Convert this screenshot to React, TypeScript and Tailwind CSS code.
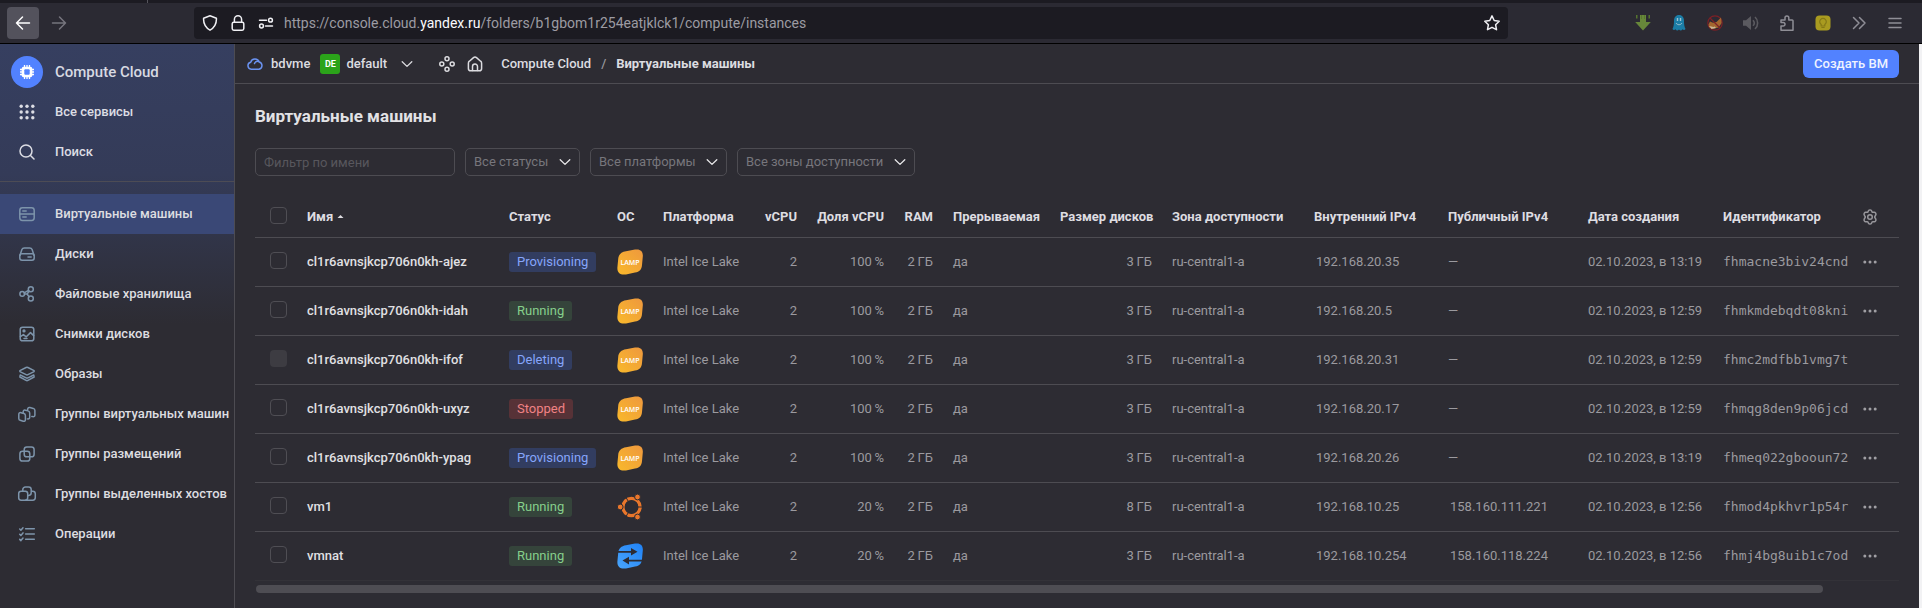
import React, { useState } from "react";

type IconProps = { className?: string; children: React.ReactNode };

function Glyph({ className = "size-4", children }: IconProps) {
  return (
    <svg
      viewBox="0 0 16 16"
      className={`shrink-0 ${className}`}
      fill="none"
      stroke="currentColor"
      strokeWidth="1.5"
      strokeLinecap="round"
      strokeLinejoin="round"
      aria-hidden="true"
    >
      {children}
    </svg>
  );
}

function Chevron({ className = "size-4" }: { className?: string }) {
  return (
    <Glyph className={className}>
      <path d="M3.200 5.800 8 10.400l4.800-4.600" strokeWidth="1.300" />
    </Glyph>
  );
}

const navItems: { label: string; active?: boolean; icon: React.ReactNode }[] = [
  {
    label: "Виртуальные машины",
    active: true,
    icon: (
      <>
        <rect x=".8" y="1.800" width="14.400" height="12.600" rx="2.600" />
        <path d="M.8 8h14.400M3.800 5h3.400M3.800 11h3.400" />
      </>
    ),
  },
  {
    label: "Диски",
    icon: (
      <>
        <path d="M1 9.200 2.900 3.600A2.600 2.600 0 0 1 5.300 1.900h5.400a2.600 2.600 0 0 1 2.400 1.700L15 9.200" />
        <rect x=".8" y="7.800" width="14.400" height="6.400" rx="2.200" />
        <path d="M9 11h3.200" />
      </>
    ),
  },
  {
    label: "Файловые хранилища",
    icon: (
      <>
        <circle cx="3.200" cy="7.900" r="2.300" />
        <circle cx="11.800" cy="3.200" r="2.500" />
        <circle cx="11.800" cy="12.600" r="2.500" />
        <path d="m5.200 6.800 4.300-2.400M5.500 8h2.600l2 2.700M8.100 8 10.100 5.300" />
      </>
    ),
  },
  {
    label: "Снимки дисков",
    icon: (
      <>
        <rect x="1.200" y="1.200" width="13.600" height="13.600" rx="2.400" />
        <path d="m1.400 10.600 3-2 2.900 2.200 4.200-4.200 3.200 3M5 12.400h3" />
        <circle cx="5" cy="4.900" r=".9" fill="currentColor" />
      </>
    ),
  },
  {
    label: "Образы",
    icon: (
      <>
        <path d="M7.100 1.500.9 4.600v1l6.200 3.100c.6.3 1.200.3 1.800 0l6.200-3.100v-1L8.900 1.500c-.6-.3-1.200-.3-1.800 0Z" />
        <path d="M1.200 9 .9 11l6.200 3.400c.6.3 1.200.3 1.800 0l6.200-3.400-.3-2L8.900 11.900c-.6.3-1.200.3-1.800 0Z" />
      </>
    ),
  },
  {
    label: "Группы виртуальных машин",
    icon: (
      <>
        <path d="M-.2 8.400c0-1.500 1-2 2.200-1.700l3 .8c1 .3 1.400.9 1.400 1.900v4.300c0 1.400-1 1.900-2.200 1.500l-3-.9c-1-.3-1.400-.9-1.400-1.900Z" />
        <path d="M4.200 6.700c-.3-1.900.7-2.900 2.200-2.500l2.600.7c1.200.3 1.700.9 1.700 2v4.400c0 1.300-.9 2-2.400 1.600M8.600 4.100c-.2-2 .8-3 2.300-2.600l3.400.9c1 .3 1.600 1 1.600 2v4.600c0 1.300-1 2-2.300 1.600l-.8-.2" />
      </>
    ),
  },
  {
    label: "Группы размещений",
    icon: (
      <>
        <rect x="5.200" y=".9" width="9.900" height="9.900" rx="2.600" />
        <rect x=".9" y="5.200" width="9.900" height="9.900" rx="2.600" />
      </>
    ),
  },
  {
    label: "Группы выделенных хостов",
    icon: (
      <>
        <rect x="-.3" y="5.200" width="9" height="9" rx="2.400" />
        <path d="M3.800 5V3.600A2.600 2.600 0 0 1 6.400 1h3.200a2.600 2.600 0 0 1 2.600 2.600v3.200A2.600 2.600 0 0 1 9.800 9.400H8.900M12.300 5.200h1.400a2.600 2.600 0 0 1 2.600 2.600v3.800a2.600 2.600 0 0 1-2.600 2.600H6.500" />
      </>
    ),
  },
  {
    label: "Операции",
    icon: (
      <path d="M6.600 2.800h8.700M6.600 8h8.700M6.600 13.200h8.700M.7 3l1.200 1.200L4 1.700M.7 8.200l1.200 1.200L4 6.900M.7 13.400l1.200 1.200L4 12.100" />
    ),
  },
];

function Sidebar() {
  return (
    <aside className="flex w-[235px] shrink-0 flex-col border-r border-[#4d4c52] bg-linear-to-b from-[#363f60] from-0% via-[#343b58] via-[130px] to-[#2d2c33] to-[280px]">
      <div className="flex flex-col border-b border-[#4d4c55] pt-2 pb-[9px]">
        <a href="#compute" className="flex h-10 items-center gap-3 pl-[11px] text-[15px] text-[#d8dae2]">
          <span className="flex size-8 items-center justify-center rounded-full bg-[#5282ff] text-white">
            <svg viewBox="0 0 16 16" className="size-4" aria-hidden="true">
              <path
                d="M5.500 1v14M8 1v14M10.500 1v14M1 5.500h14M1 8h14M1 10.500h14"
                stroke="currentColor"
                strokeWidth="1.300"
              />
              <rect x="2.700" y="2.700" width="10.600" height="10.600" rx="2" fill="currentColor" />
              <rect x="5.300" y="5.300" width="5.400" height="5.400" rx="1" fill="#5282ff" />
            </svg>
          </span>
          Compute Cloud
        </a>
        <a href="#services" className="flex h-10 items-center gap-5 pl-[19px] text-[#dcdde4]">
          <svg viewBox="0 0 16 16" className="size-4 shrink-0" fill="currentColor" aria-hidden="true">
            {[2.2, 8, 13.8].map((y) =>
              [2.2, 8, 13.8].map((x) => <circle key={`${x}-${y}`} cx={x} cy={y} r="1.700" />),
            )}
          </svg>
          Все сервисы
        </a>
        <a href="#search" className="flex h-10 items-center gap-5 pl-[19px] text-[#dcdde4]">
          <Glyph>
            <circle cx="7" cy="7" r="6" />
            <path d="m11.500 11.500 3.500 3.500" />
          </Glyph>
          Поиск
        </a>
      </div>
      <nav className="flex flex-col pt-3">
        {navItems.map((item) => (
          <a
            key={item.label}
            href="#nav"
            aria-current={item.active ? "page" : undefined}
            className={`flex h-10 items-center gap-5 pl-[19px] whitespace-nowrap text-[#dddde0] ${item.active ? "bg-[#3a4876]" : ""}`}
          >
            <Glyph className="size-4 overflow-visible text-[#7d94ab]">{item.icon}</Glyph>
            {item.label}
          </a>
        ))}
      </nav>
    </aside>
  );
}

function BrowserBar() {
  const button = "flex size-9 items-center justify-center text-[#8f8e96]";
  return (
    <header className="shrink-0 border-b border-black bg-[#2b2a33]">
      <div className="h-[3px] bg-[#1c1b22] pl-[147px]">
        <div className="h-full w-px bg-[#55545c]" />
      </div>
      <div className="flex h-10 items-center font-['Roboto','Liberation_Sans',sans-serif] font-normal">
        <div className="flex w-[194px] shrink-0 gap-1 pl-[7px]">
          <button type="button" aria-label="Назад" className="flex size-8 items-center justify-center rounded bg-[#53525c] text-white">
            <Glyph>
              <path d="M14.500 8H1.500M7.500 2 1.500 8l6 6" />
            </Glyph>
          </button>
          <button type="button" aria-label="Вперёд" className="flex size-8 items-center justify-center text-[#76757e]">
            <Glyph>
              <path d="M1.500 8h13M8.500 2l6 6-6 6" />
            </Glyph>
          </button>
        </div>
        <div className="flex h-8 min-w-0 flex-1 items-center rounded bg-[#1c1b22] px-2 text-[#f0f0f4]">
          <Glyph>
            <path d="M8 .8 1.600 3.200c-.3 4.800 1.400 9 6.400 12 5-3 6.700-7.200 6.400-12Z" />
          </Glyph>
          <Glyph className="ml-3 size-4">
            <rect x="2.200" y="7.200" width="11.600" height="8" rx="1.600" />
            <path d="M4.400 7V4.400a3.600 3.600 0 0 1 7.200 0V7" />
          </Glyph>
          <Glyph className="ml-3 size-4">
            <path d="M1.500 5.200h7M7.500 11h7" />
            <circle cx="12.500" cy="5.200" r="1.900" />
            <circle cx="3.500" cy="11" r="1.900" />
          </Glyph>
          <span className="ml-[10px] min-w-0 flex-1 truncate text-sm text-[#9c9ba3]">
            https://console.cloud.<span className="text-[#fbfbfe]">yandex.ru</span>
            /folders/b1gbom1r254eatjklck1/compute/instances
          </span>
          <Glyph>
            <path d="m8 .9 2.200 4.600 5 .7-3.600 3.500.9 5L8 12.300l-4.500 2.400.9-5L.8 6.200l5-.7Z" />
          </Glyph>
        </div>
        <div className="flex w-[414px] shrink-0 justify-end pr-[9px]">
          <button type="button" aria-label="Загрузки" className={button}>
            <svg viewBox="0 0 16 16" className="size-4" aria-hidden="true">
              <path d="M5 0h6v7h4.800L8 15.500.2 7H5Z" fill="#67873a" />
              <path d="M2.500 0v3.500H1V0ZM15 0v3.500h-1.500V0ZM7 0v4h-.8V0ZM9.800 0v4H9V0Z" fill="#55732f" />
            </svg>
          </button>
          <button type="button" aria-label="Ghostery" className={button}>
            <svg viewBox="0 0 16 16" className="size-4" aria-hidden="true">
              <path d="M8 0c3.300 0 5 2.500 5 5.500 0 4 .3 6 1.500 8.500-1 1.700-2.200 1-3 .3-1 1.500-2.300 1.500-3.500.3-1.200 1.200-2.500 1.200-3.500-.3-.8.700-2 1.400-3-.3C2.700 11.500 3 9.500 3 5.500 3 2.500 4.700 0 8 0Z" fill="#1b7da6" />
              <path d="M5.800 3h1.400v3H5.800ZM8.800 3h1.400v3H8.800Z" fill="#9fc3d2" />
              <path d="M5 8c1.500 2.300 4.500 2.300 6 0" stroke="#9fc3d2" fill="none" />
            </svg>
          </button>
          <button type="button" aria-label="Блокировщик" className={button}>
            <svg viewBox="0 0 16 16" className="size-4" aria-hidden="true">
              <circle cx="8" cy="8" r="7.200" fill="#2b2a33" stroke="#7d2026" strokeWidth="1.200" />
              <path d="M1.500 9.500 3 6.500l3 1.300 3.500-.8L14 2.500 14.600 8l-2.900 4.500-5.200 1.200-4.500-1.500Z" fill="#a3662f" />
              <path d="m2 11 4.500 1 1.200-.6L9 13l-4.500 1Z" fill="#cbb795" />
              <path d="M3 3l10 10" stroke="#7d2026" strokeWidth="1.200" />
            </svg>
          </button>
          <button type="button" aria-label="Звук" className={button}>
            <svg viewBox="0 0 16 16" className="size-4" fill="none" stroke="#5b5a60" strokeWidth="1.600" aria-hidden="true">
              <path d="M0 5.200h3L8 1v14l-5-4.200H0Z" fill="#5b5a60" stroke="none" />
              <path d="M10 5.200c1.500 1.600 1.500 4 0 5.600M12 2c3.500 3 3.500 9 0 12" />
            </svg>
          </button>
          <button type="button" aria-label="Расширения" className={button}>
            <Glyph>
              <path d="M2 15.200V11h2.200a1.800 1.800 0 0 0 0-3.600H2V5h4V2.800a1.900 1.900 0 0 1 3.800 0V5h3.400a.8.8 0 0 1 .8.8v9.400Z" />
            </Glyph>
          </button>
          <button type="button" aria-label="Подсказки" className={button}>
            <svg viewBox="0 0 16 16" className="size-4" aria-hidden="true">
              <rect x=".5" y=".5" width="15" height="15" rx="4" fill="#a99b20" />
              <path d="M6.200 11V9.500a3.300 3.300 0 1 1 3.600 0V11ZM6.400 12.500h3.200" fill="none" stroke="#857917" strokeWidth="1.200" />
            </svg>
          </button>
          <button type="button" aria-label="Ещё" className={button}>
            <Glyph>
              <path d="m2.500 2.500 5.500 5.500-5.500 5.500M8.500 2.500 14 8l-5.500 5.500" />
            </Glyph>
          </button>
          <button type="button" aria-label="Меню" className={button}>
            <Glyph>
              <path d="M2 3.500h12M2 8h12M2 12.500h12" />
            </Glyph>
          </button>
        </div>
      </div>
    </header>
  );
}

const badgeShape =
  "M9 2.200 18 .6C23.300-.3 26.200 2.300 25.800 7.500L25 16c-.4 4.800-2.300 6.700-7 7.500L9 25.400C3.500 26.400 0 23.800.4 18.500l.8-8.500C1.600 5.200 4.300 3 9 2.200Z";

function OsIcon({ kind }: { kind: Os }) {
  if (kind === "ubuntu") {
    return (
      <svg viewBox="0 0 26 26" className="size-[26px]" aria-label="Ubuntu">
        <circle cx="14.500" cy="13" r="8.600" fill="none" stroke="#e9762b" strokeWidth="3.300" />
        <path d="M14.500 13h13M14.500 13 8 1.700M14.500 13 8 24.300" stroke="#2d2c33" strokeWidth="1" />
        <circle cx="14.500" cy="13" r="6.500" fill="#2d2c33" />
        <g fill="#e9762b" stroke="#2d2c33" strokeWidth="1">
          <circle cx="3.200" cy="13" r="2.900" />
          <circle cx="20.500" cy="3" r="2.900" />
          <circle cx="20.500" cy="23" r="2.900" />
        </g>
      </svg>
    );
  }
  if (kind === "nat") {
    return (
      <svg viewBox="0 0 26 26" className="size-[26px]" aria-label="NAT">
        <defs>
          <linearGradient id="nat" x1="0" y1="1" x2="1" y2="0">
            <stop offset="0" stopColor="#4aa5fb" />
            <stop offset="1" stopColor="#1f82f6" />
          </linearGradient>
        </defs>
        <path d={badgeShape} fill="url(#nat)" />
        <path
          d="M0 7.900h14V5l6.500 3.800-6.500 3.800V9.700H0ZM26 16.700H12v-2.900l-6.500 3.800 6.500 3.800v-2.900h14Z"
          fill="#2d2c33"
        />
      </svg>
    );
  }
  return (
    <svg viewBox="0 0 26 26" className="size-[26px]" aria-label="LAMP">
      <defs>
        <linearGradient id="lamp" x1="0" y1="1" x2="1" y2="0">
          <stop offset="0" stopColor="#f9b92b" />
          <stop offset="1" stopColor="#ee983e" />
        </linearGradient>
      </defs>
      <path d={badgeShape} fill="url(#lamp)" />
      <text x="13" y="16" textAnchor="middle" className="fill-white font-['Open_Sans',sans-serif] text-[7px] font-semibold">
        LAMP
      </text>
    </svg>
  );
}

type Os = "lamp" | "ubuntu" | "nat";
type Status = "Provisioning" | "Running" | "Deleting" | "Stopped";

const statusStyle: Record<Status, string> = {
  Provisioning: "bg-[#323d60] text-[#86a5fb]",
  Deleting: "bg-[#323d60] text-[#86a5fb]",
  Running: "bg-[#35443b] text-[#86cf8b]",
  Stopped: "bg-[#573237] text-[#f08285]",
};

const rows: {
  name: string;
  status: Status;
  os: Os;
  share: number;
  disk: number;
  local: string;
  pub?: string;
  time: string;
  id: string;
}[] = [
  { name: "cl1r6avnsjkcp706n0kh-ajez", status: "Provisioning", os: "lamp", share: 100, disk: 3, local: "192.168.20.35", time: "13:19", id: "fhmacne3biv24cnd" },
  { name: "cl1r6avnsjkcp706n0kh-idah", status: "Running", os: "lamp", share: 100, disk: 3, local: "192.168.20.5", time: "12:59", id: "fhmkmdebqdt08kni" },
  { name: "cl1r6avnsjkcp706n0kh-ifof", status: "Deleting", os: "lamp", share: 100, disk: 3, local: "192.168.20.31", time: "12:59", id: "fhmc2mdfbb1vmg7t" },
  { name: "cl1r6avnsjkcp706n0kh-uxyz", status: "Stopped", os: "lamp", share: 100, disk: 3, local: "192.168.20.17", time: "12:59", id: "fhmqg8den9p06jcd" },
  { name: "cl1r6avnsjkcp706n0kh-ypag", status: "Provisioning", os: "lamp", share: 100, disk: 3, local: "192.168.20.26", time: "13:19", id: "fhmeq022gbooun72" },
  { name: "vm1", status: "Running", os: "ubuntu", share: 20, disk: 8, local: "192.168.10.25", pub: "158.160.111.221", time: "12:56", id: "fhmod4pkhvr1p54r" },
  { name: "vmnat", status: "Running", os: "nat", share: 20, disk: 3, local: "192.168.10.254", pub: "158.160.118.224", time: "12:56", id: "fhmj4bg8uib1c7od" },
];

const thin = "\u2009";

const box =
  "block size-[17px] appearance-none rounded-[4px] border border-[#4f4e54] checked:bg-[#5282ff] disabled:border-transparent disabled:bg-[#3d3c42]";

function VmTable() {
  const [selected, setSelected] = useState<string[]>([]);
  const toggle = (name: string) =>
    setSelected((s) => (s.includes(name) ? s.filter((n) => n !== name) : [...s, name]));
  const cell = "px-[10px] text-[#9b9a9f]";
  return (
    <table className="w-full table-fixed border-separate border-spacing-0 text-left whitespace-nowrap [&_td]:h-[49px] [&_td]:border-b [&_td]:border-[#4d4c52] [&_td]:pb-px [&_th]:h-[42px] [&_th]:border-b [&_th]:border-[#4d4c52] [&_th]:px-[10px] [&_tr:last-child_td]:border-[#333238] [&_tr>*:first-child]:pb-[3px]">
      <colgroup>
        <col className="w-[42px]" />
        <col className="w-[202px]" />
        <col className="w-[108px]" />
        <col className="w-[46px]" />
        <col className="w-[102px]" />
        <col className="w-[52px]" />
        <col className="w-[87px]" />
        <col className="w-[49px]" />
        <col className="w-[107px]" />
        <col className="w-[112px]" />
        <col className="w-[142px]" />
        <col className="w-[134px]" />
        <col className="w-[140px]" />
        <col className="w-[135px]" />
        <col className="w-[133px]" />
        <col className="w-[53px]" />
      </colgroup>
      <thead className="text-[#dedde1]">
        <tr className="[&_th]:font-bold">
          <th className="!px-[15px]">
            <input
              type="checkbox"
              aria-label="Выбрать все"
              className={box}
              checked={selected.length === rows.length}
              onChange={(e) => setSelected(e.target.checked ? rows.map((r) => r.name) : [])}
            />
          </th>
          <th aria-sort="ascending">
            <span className="flex items-center gap-1">
              Имя
              <svg viewBox="0 0 8 4" className="h-[3px] w-[7px]" fill="currentColor" aria-hidden="true">
                <path d="M4 0 8 4H0Z" />
              </svg>
            </span>
          </th>
          <th>Статус</th>
          <th>ОС</th>
          <th>Платформа</th>
          <th className="text-right">vCPU</th>
          <th className="text-right">Доля vCPU</th>
          <th className="text-right">RAM</th>
          <th>Прерываемая</th>
          <th className="text-right">Размер дисков</th>
          <th>Зона доступности</th>
          <th>Внутренний IPv4</th>
          <th>Публичный IPv4</th>
          <th>Дата создания</th>
          <th>Идентификатор</th>
          <th>
            <button type="button" aria-label="Настроить столбцы" className="flex size-7 items-center justify-center text-[#98979c]">
              <Glyph>
                <path d="M6.600 1.500c.4-.7 2.400-.7 2.800 0l.6 1.300c.2.400.6.600 1 .5l1.400-.1c.9 0 1.900 1.700 1.500 2.400l-.8 1.500a1.200 1.200 0 0 0 0 1.800l.8 1.500c.4.700-.6 2.400-1.500 2.400l-1.400-.1c-.4 0-.8.100-1 .5l-.6 1.300c-.4.700-2.400.7-2.800 0L6 13.200c-.2-.4-.6-.6-1-.5l-1.400.1c-.9 0-1.900-1.700-1.500-2.400l.8-1.500a1.200 1.200 0 0 0 0-1.800l-.8-1.500c-.4-.7.600-2.400 1.500-2.400l1.400.1c.4 0 .8-.1 1-.5Z" />
                <circle cx="8" cy="8" r="2.300" />
              </Glyph>
            </button>
          </th>
        </tr>
      </thead>
      <tbody className="font-normal">
        {rows.map((r) => (
          <tr key={r.name}>
            <td className="px-[15px]">
              <input
                type="checkbox"
                aria-label={r.name}
                className={box}
                disabled={r.status === "Deleting"}
                checked={selected.includes(r.name)}
                onChange={() => toggle(r.name)}
              />
            </td>
            <td className="px-[10px]">
              <a href="#vm" className="font-medium text-[#e0e0e3]">{r.name}</a>
            </td>
            <td className="px-[10px]">
              <span className={`inline-block rounded-[3px] px-2 leading-5 ${statusStyle[r.status]}`}>{r.status}</span>
            </td>
            <td className="px-[10px]">
              <OsIcon kind={r.os} />
            </td>
            <td className={cell}>Intel Ice Lake</td>
            <td className={`${cell} text-right`}>2</td>
            <td className={`${cell} text-right`}>{`${r.share}${thin}%`}</td>
            <td className={`${cell} text-right`}>{`2${thin}ГБ`}</td>
            <td className={cell}>да</td>
            <td className={`${cell} text-right`}>{`${r.disk}${thin}ГБ`}</td>
            <td className={cell}>ru-central1-a</td>
            <td className={`${cell} pl-3`}>{r.local}</td>
            <td className={r.pub ? `${cell} pl-3` : cell}>{r.pub ?? "—"}</td>
            <td className={cell}>02.10.2023, в {r.time}</td>
            <td className="pl-[10px] font-['DejaVu_Sans_Mono',monospace] text-[#9b9a9f]">{r.id}</td>
            <td className="px-[10px]">
              {r.status !== "Deleting" && (
                <button type="button" aria-label="Действия" className="flex size-7 items-center justify-center text-[#a09fa4]">
                  <svg viewBox="0 0 16 16" className="size-4" fill="currentColor" aria-hidden="true">
                    <circle cx="2.800" cy="8" r="1.500" />
                    <circle cx="8" cy="8" r="1.500" />
                    <circle cx="13.200" cy="8" r="1.500" />
                  </svg>
                </button>
              )}
            </td>
          </tr>
        ))}
      </tbody>
    </table>
  );
}

function Filter({ label }: { label: string }) {
  return (
    <div className="relative">
      <select
        aria-label={label}
        className="h-7 appearance-none rounded-[5px] border border-[#4d4c52] bg-transparent pr-[30px] pl-2 font-normal text-[#77767c]"
      >
        <option>{label}</option>
      </select>
      <Chevron className="pointer-events-none absolute top-1.5 right-[7px] size-4 text-[#e8e8ea]" />
    </div>
  );
}

export default function App() {
  return (
    <div className="flex min-h-screen flex-col bg-[#2d2c33] font-['Roboto','Noto_Sans',sans-serif] text-[13px] leading-[18px] font-medium">
      <BrowserBar />
      <div className="flex flex-1 border-r-[3px] border-[#f2f2f4]">
        <Sidebar />
        <main className="min-w-0 flex-1">
          <div className="flex h-10 items-center border-b border-[#4d4c52] pr-5 pl-3 text-[#dcdce0]">
            <Glyph className="size-4 text-[#6a92f0]">
              <path d="M4.200 13.200a3.500 3.500 0 0 1-.5-6.900 4.400 4.400 0 0 1 8.500-.3 3.700 3.700 0 0 1-.2 7.200ZM7.500 7.500a3 3 0 0 1 4.700-1.500" />
            </Glyph>
            <a href="#cloud" className="ml-2">bdvme</a>
            <span className="ml-[10px] flex size-5 items-center justify-center rounded-[3px] bg-[#2ba31a] text-[9px] font-bold text-white">DE</span>
            <a href="#folder" className="ml-1.5">default</a>
            <button type="button" aria-label="Сменить каталог" className="ml-3">
              <Chevron />
            </button>
            <Glyph className="ml-6 size-4">
              <circle cx="8" cy="2.800" r="2" />
              <circle cx="8" cy="13.200" r="2" />
              <circle cx="2.800" cy="8" r="2" />
              <circle cx="13.200" cy="8" r="2" />
            </Glyph>
            <Glyph className="ml-3 size-4">
              <path d="M1.400 7.200c0-.8.3-1.500 1-2L6.500 1.600a2.300 2.300 0 0 1 3 0l4.100 3.600c.7.500 1 1.200 1 2v5.200a2.400 2.400 0 0 1-2.400 2.400H3.800a2.400 2.400 0 0 1-2.400-2.400Z" />
              <path d="M5.500 14.500v-4a2.500 2.500 0 0 1 5 0v4" />
            </Glyph>
            <nav className="ml-[18px] flex gap-[10px]">
              <a href="#compute">Compute Cloud</a>
              <span className="text-[#97969b]">/</span>
              <span className="font-bold">Виртуальные машины</span>
            </nav>
            <button type="button" className="ml-auto h-7 rounded-md bg-[#5282ff] px-[11px] text-[#eef2ff]">Создать ВМ</button>
          </div>
          <div className="px-5">
            <h1 className="pt-5 text-[17px] leading-6 font-bold text-[#e2e2e5]">Виртуальные машины</h1>
            <div className="flex gap-[10px] pt-5">
              <input
                type="text"
                aria-label="Фильтр по имени"
                placeholder="Фильтр по имени"
                className="h-7 w-[200px] rounded-[5px] border border-[#4d4c52] bg-transparent px-2 font-normal text-[#dcdce0] placeholder:text-[#58575d]"
              />
              <Filter label="Все статусы" />
              <Filter label="Все платформы" />
              <Filter label="Все зоны доступности" />
            </div>
            <div className="pt-5">
              <VmTable />
            </div>
            <div className="mt-1 pl-px">
              <div className="h-2 w-[95.4%] rounded-full bg-[#4e4d53]" />
            </div>
          </div>
        </main>
      </div>
    </div>
  );
}
